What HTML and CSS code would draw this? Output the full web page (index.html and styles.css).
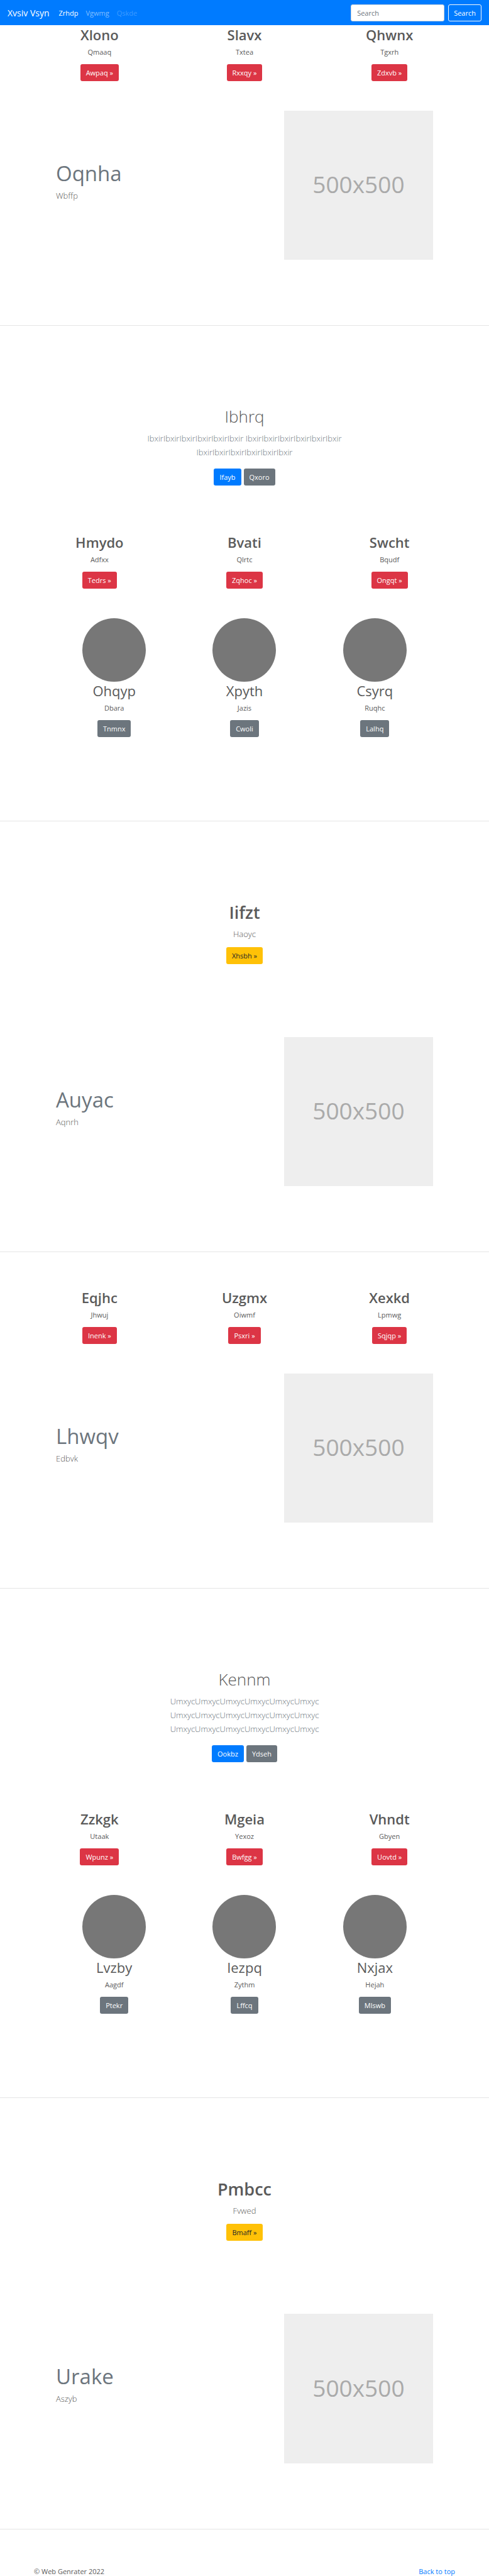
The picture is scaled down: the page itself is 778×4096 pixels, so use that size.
FILE: index.html
```html
<!DOCTYPE html>
<html lang="en">
<head>
<meta charset="utf-8">
<meta name="viewport" content="width=device-width, initial-scale=1">
<title>Xvsiv Vsyn</title>
<link rel="stylesheet" href="styles.css">
</head>
<body>
<header class="navbar" id="top">
  <a class="brand" href="#">Xvsiv Vsyn</a>
  <nav class="nav">
    <a class="nav-link active" href="#">Zrhdp</a>
    <a class="nav-link" href="#">Vgwmg</a>
    <a class="nav-link disabled" href="#" aria-disabled="true">Qskde</a>
  </nav>
  <form class="search">
    <input class="search-input" type="search" placeholder="Search" aria-label="Search">
    <button class="btn btn-outline" type="submit">Search</button>
  </form>
</header>

<main>
  <section class="trio">
    <div class="cell"><h2 class="title strong">Xlono</h2><p class="text">Qmaaq</p><a class="btn btn-danger" href="#">Awpaq »</a></div>
    <div class="cell"><h2 class="title strong">Slavx</h2><p class="text">Txtea</p><a class="btn btn-danger" href="#">Rxxqy »</a></div>
    <div class="cell"><h2 class="title strong">Qhwnx</h2><p class="text">Tgxrh</p><a class="btn btn-danger" href="#">Zdxvb »</a></div>
  </section>
  <section class="feature">
    <div class="feature-text"><h2 class="feature-title">Oqnha</h2><p class="lead">Wbffp</p></div>
    <div class="feature-media"><div class="placeholder">500x500</div></div>
  </section>
  <hr class="divider">

  <section class="hero">
    <h1 class="hero-title">Ibhrq</h1>
    <p class="lead muted">IbxirIbxirIbxirIbxirIbxirIbxir IbxirIbxirIbxirIbxirIbxirIbxir IbxirIbxirIbxirIbxirIbxirIbxir</p>
    <div class="actions"><a class="btn btn-primary" href="#">Ifayb</a><a class="btn btn-secondary" href="#">Qxoro</a></div>
  </section>
  <section class="trio">
    <div class="cell"><h2 class="title strong">Hmydo</h2><p class="text">Adfxx</p><a class="btn btn-danger" href="#">Tedrs »</a></div>
    <div class="cell"><h2 class="title strong">Bvati</h2><p class="text">Qlrtc</p><a class="btn btn-danger" href="#">Zqhoc »</a></div>
    <div class="cell"><h2 class="title strong">Swcht</h2><p class="text">Bqudf</p><a class="btn btn-danger" href="#">Ongqt »</a></div>
  </section>
  <section class="people">
    <div class="cell"><div class="avatar"></div><h2 class="title">Ohqyp</h2><p class="text">Dbara</p><a class="btn btn-secondary" href="#">Tnmnx</a></div>
    <div class="cell"><div class="avatar"></div><h2 class="title">Xpyth</h2><p class="text">Jazis</p><a class="btn btn-secondary" href="#">Cwoli</a></div>
    <div class="cell"><div class="avatar"></div><h2 class="title">Csyrq</h2><p class="text">Ruqhc</p><a class="btn btn-secondary" href="#">Lalhq</a></div>
  </section>
  <hr class="divider">

  <section class="callout">
    <h1 class="hero-title strong">Iifzt</h1>
    <p class="lead">Haoyc</p>
    <a class="btn btn-warning" href="#">Xhsbh »</a>
  </section>
  <section class="feature">
    <div class="feature-text"><h2 class="feature-title">Auyac</h2><p class="lead">Aqnrh</p></div>
    <div class="feature-media"><div class="placeholder">500x500</div></div>
  </section>
  <hr class="divider divider-tight">

  <section class="trio">
    <div class="cell"><h2 class="title strong">Eqjhc</h2><p class="text">Jhwuj</p><a class="btn btn-danger" href="#">Inenk »</a></div>
    <div class="cell"><h2 class="title strong">Uzgmx</h2><p class="text">Oiwmf</p><a class="btn btn-danger" href="#">Psxri »</a></div>
    <div class="cell"><h2 class="title strong">Xexkd</h2><p class="text">Lpmwg</p><a class="btn btn-danger" href="#">Sqjqp »</a></div>
  </section>
  <section class="feature">
    <div class="feature-text"><h2 class="feature-title">Lhwqv</h2><p class="lead">Edbvk</p></div>
    <div class="feature-media"><div class="placeholder">500x500</div></div>
  </section>
  <hr class="divider">

  <section class="hero">
    <h1 class="hero-title">Kennm</h1>
    <p class="lead muted">UmxycUmxycUmxycUmxycUmxycUmxyc UmxycUmxycUmxycUmxycUmxycUmxyc UmxycUmxycUmxycUmxycUmxycUmxyc</p>
    <div class="actions"><a class="btn btn-primary" href="#">Ookbz</a><a class="btn btn-secondary" href="#">Ydseh</a></div>
  </section>
  <section class="trio">
    <div class="cell"><h2 class="title strong">Zzkgk</h2><p class="text">Utaak</p><a class="btn btn-danger" href="#">Wpunz »</a></div>
    <div class="cell"><h2 class="title strong">Mgeia</h2><p class="text">Yexoz</p><a class="btn btn-danger" href="#">Bwfgg »</a></div>
    <div class="cell"><h2 class="title strong">Vhndt</h2><p class="text">Gbyen</p><a class="btn btn-danger" href="#">Uovtd »</a></div>
  </section>
  <section class="people">
    <div class="cell"><div class="avatar"></div><h2 class="title">Lvzby</h2><p class="text">Aagdf</p><a class="btn btn-secondary" href="#">Ptekr</a></div>
    <div class="cell"><div class="avatar"></div><h2 class="title">Iezpq</h2><p class="text">Zythm</p><a class="btn btn-secondary" href="#">Lffcq</a></div>
    <div class="cell"><div class="avatar"></div><h2 class="title">Nxjax</h2><p class="text">Hejah</p><a class="btn btn-secondary" href="#">Mlswb</a></div>
  </section>
  <hr class="divider">

  <section class="callout">
    <h1 class="hero-title strong">Pmbcc</h1>
    <p class="lead">Fvwed</p>
    <a class="btn btn-warning" href="#">Bmaff »</a>
  </section>
  <section class="feature">
    <div class="feature-text"><h2 class="feature-title">Urake</h2><p class="lead">Aszyb</p></div>
    <div class="feature-media"><div class="placeholder">500x500</div></div>
  </section>
  <hr class="divider divider-tight">
</main>

<footer class="footer">
  <p class="copyright">© Web Genrater 2022</p>
  <a class="back" href="#top">Back to top</a>
</footer>
</body>
</html>
```

FILE: styles.css
```css
* { box-sizing: border-box; }

body {
  margin: 0;
  background: #fff;
  color: #5a5a5a;
  font-family: "Open Sans", "Noto Sans", sans-serif;
  font-size: 11px;
  line-height: 17px;
}

h1, h2, p { margin: 0; }
a { color: #007bff; text-decoration: none; }

/* Navigation bar */
.navbar {
  display: flex;
  align-items: center;
  height: 40px;
  margin-bottom: 1px;
  padding: 0 12px;
  background: #007bff;
}
.brand { margin-right: 15px; color: #fff; font-size: 14px; }
.nav { display: flex; flex: 1; gap: 12px; }
.nav-link { color: rgba(255, 255, 255, .5); }
.nav-link.active { color: #fff; }
.nav-link.disabled { color: rgba(255, 255, 255, .25); }
.search { display: flex; gap: 6px; }
.search-input {
  width: 149px;
  height: 27px;
  padding: 0 9px;
  border: 1px solid #ced4da;
  border-radius: 3px;
  background: #fff;
  color: #495057;
  font: inherit;
}
.search-input::placeholder { color: #6c757d; opacity: 1; }

/* Buttons */
.btn {
  display: inline-block;
  height: 27px;
  padding: 4px 8px;
  border: 1px solid transparent;
  border-radius: 3px;
  color: #fff;
  font: inherit;
  line-height: 17px;
  vertical-align: top;
}
.btn-outline { border-color: #f8f9fa; background: transparent; }
.btn-primary { background: #007bff; }
.btn-secondary { background: #6c757d; }
.btn-danger { background: #dc3545; }
.btn-warning { background: #ffc107; color: #212529; }

/* Three-column rows */
.trio, .people {
  display: grid;
  grid-template-columns: repeat(3, 1fr);
  margin-bottom: 47px;
  text-align: center;
}
.trio { padding: 0 43px; }
.people { margin-bottom: 133px; padding: 0 78px; }
.title { margin-bottom: 5px; font-size: 22px; font-weight: 400; line-height: 28px; }
.strong { font-weight: 600; }
.text { margin-bottom: 11px; }
.avatar { width: 101px; height: 101px; margin: 0 auto; border-radius: 50%; background: #777; }

/* Text beside a picture */
.feature {
  display: grid;
  grid-template-columns: 7fr 5fr;
  margin-bottom: 104px;
  padding: 0 78px;
}
.feature-text { padding: 82px 11px 0; }
.feature-media { padding: 0 11px; }
.feature-title { margin-bottom: 6px; color: #6c757d; font-size: 33px; font-weight: 400; line-height: 36px; }
.placeholder {
  display: flex;
  align-items: center;
  justify-content: center;
  aspect-ratio: 1;
  padding-bottom: 4px;
  background: #eee;
  color: #aaa;
  font-size: 37px;
}
.lead { font-size: 13px; font-weight: 300; line-height: 22px; }
.muted { color: #6c757d; }

.divider { height: 1px; margin: 0 0 127px; border: 0; background: #e5e5e5; }
.divider-tight { margin-bottom: 58px; }

/* Centred introductions */
.hero, .callout { text-align: center; }
.hero { margin-bottom: 76px; padding: 0 220px; }
.hero .lead { margin-bottom: 15px; }
.hero-title { margin-bottom: 6px; font-size: 26px; font-weight: 300; line-height: 35px; }
.hero-title.strong { font-size: 27px; font-weight: 600; }
.callout { margin-bottom: 116px; }
.callout .lead { margin-bottom: 10px; }
.actions { display: flex; justify-content: center; gap: 4px; }

.footer { display: flex; justify-content: space-between; padding: 0 54px; }
```
